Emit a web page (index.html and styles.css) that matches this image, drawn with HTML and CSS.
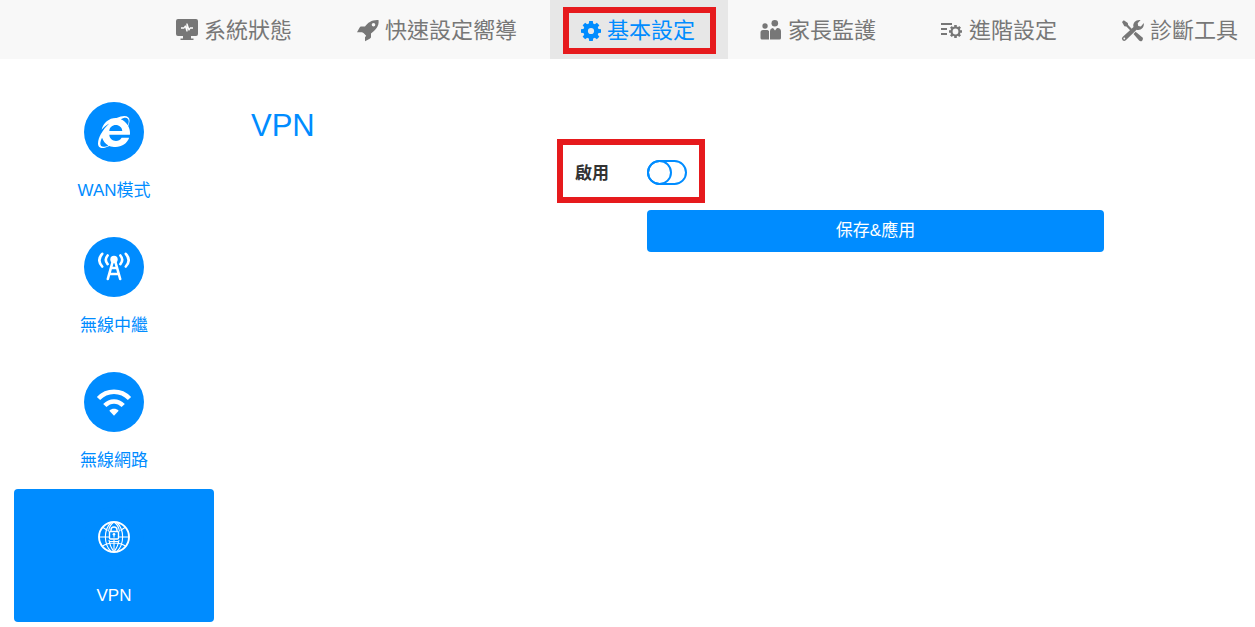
FILE: index.html
```html
<!DOCTYPE html>
<html lang="zh-Hant">
<head>
<meta charset="utf-8">
<meta name="viewport" content="width=device-width, initial-scale=1">
<title>VPN</title>
<link rel="stylesheet" href="styles.css">
</head>
<body>
<nav class="topnav">
  <a class="topnav-item" href="#status">
    <svg class="icon" viewBox="0 0 24 24" aria-hidden="true">
      <path fill="currentColor" d="M3 0h18a2 2 0 0 1 2 2v13a2 2 0 0 1-2 2h-5v2.500h2.500V21h-13v-1.500H8V17H3a2 2 0 0 1-2-2V2a2 2 0 0 1 2-2z"/>
      <path fill="none" stroke="#fff" stroke-width="1.300" stroke-linejoin="round" d="M6 9h3l1.300-2 1.700 5V5l2 6 1.200-2H18"/>
    </svg>
    系統狀態
  </a>
  <a class="topnav-item" href="#wizard">
    <svg class="icon" viewBox="0 0 24 24" aria-hidden="true">
      <path fill="currentColor" fill-rule="evenodd" d="M22.500 1C16 .5 12 3.500 9 7.500H5.500C4.500 7.500 4 8 3.500 8.800L1 13.200h5l1.500.8 2.700 2.700-1.200 1.600v3.900l4.700-2.500c.8-.5 1.300-1 1.300-2V14.500c4-3 8.500-7 7.500-13.500zM17.500 4a1.800 1.800 0 1 1 0 3.600 1.800 1.800 0 0 1 0-3.600z"/>
    </svg>
    快速設定嚮導
  </a>
  <a class="topnav-item topnav-item-active" href="#basic" aria-current="page">
    <svg class="icon icon-gear" viewBox="0 0 20 20" aria-hidden="true">
      <g fill="currentColor">
        <path d="M7.700 4L8.200 0h3.600l.5 4z"/>
        <path transform="rotate(45 10 10)" d="M7.700 4L8.200 0h3.600l.5 4z"/>
        <path transform="rotate(90 10 10)" d="M7.700 4L8.200 0h3.600l.5 4z"/>
        <path transform="rotate(135 10 10)" d="M7.700 4L8.200 0h3.600l.5 4z"/>
        <path transform="rotate(180 10 10)" d="M7.700 4L8.200 0h3.600l.5 4z"/>
        <path transform="rotate(225 10 10)" d="M7.700 4L8.200 0h3.600l.5 4z"/>
        <path transform="rotate(270 10 10)" d="M7.700 4L8.200 0h3.600l.5 4z"/>
        <path transform="rotate(315 10 10)" d="M7.700 4L8.200 0h3.600l.5 4z"/>
      </g>
      <circle cx="10" cy="10" r="5.400" fill="none" stroke="currentColor" stroke-width="4.600"/>
    </svg>
    基本設定
    <span class="callout callout-tab"></span>
  </a>
  <a class="topnav-item" href="#parental">
    <svg class="icon" viewBox="0 0 24 24" aria-hidden="true">
      <g fill="currentColor">
        <circle cx="6" cy="7" r="2.700"/>
        <circle cx="15.800" cy="4.300" r="3.300"/>
        <path d="M4 11h4.500l1.500 1v8.500H3A1.500 1.500 0 0 1 1.500 19v-5.500A2.500 2.500 0 0 1 4 11z"/>
        <path d="M14 9l2 2.500L18 9h.5a3.500 3.500 0 0 1 3.500 3.500V19a1.500 1.500 0 0 1-1.500 1.500H11v-8A3.500 3.500 0 0 1 14 9z"/>
      </g>
    </svg>
    家長監護
  </a>
  <a class="topnav-item" href="#advanced">
    <svg class="icon" viewBox="0 0 24 24" aria-hidden="true">
      <path fill="none" stroke="currentColor" stroke-width="1.800" d="M1 5h11M1 10h6M1 15h6"/>
      <circle cx="15.500" cy="12.500" r="4" fill="none" stroke="currentColor" stroke-width="2.200"/>
      <path fill="none" stroke="currentColor" stroke-width="2.600" d="M15.500 6v2.400M15.500 16.600V19M9 12.500h2.400M19.600 12.500H22M10.900 7.900l1.700 1.700M18.400 15.400l1.700 1.700M10.900 17.100l1.700-1.700M18.400 9.600l1.700-1.700"/>
    </svg>
    進階設定
  </a>
  <a class="topnav-item" href="#tools">
    <svg class="icon" viewBox="0 0 24 24" aria-hidden="true">
      <path fill="currentColor" d="M2.800 1.200l4 2.800.3 2 4.800 4.900-1.600 1.600L5.400 7.600l-2-.3L1 3z"/>
      <path fill="currentColor" d="M14.600 12.700l6.600 5.500a2.200 2.200 0 0 1-3.100 3.300l-5.600-6.500z"/>
      <path fill="currentColor" fill-rule="evenodd" d="M19.600 1l-2.900 3.300.5 2.700 2.700.5L22.800 4c.6 4.500-3 7.800-7.200 6.700L4.800 21.200a2.200 2.200 0 0 1-3.200-3.200L12.500 8C11.400 3.800 15 .3 19.600 1zM3.300 18.600a.9.9 0 1 0 0 1.800.9.9 0 0 0 0-1.800z"/>
    </svg>
    診斷工具
  </a>
</nav>

<div class="page">
  <aside class="sidebar">
    <a class="side-item" href="#wan">
      <span class="side-icon">
        <svg class="glyph" viewBox="0 0 512 512" aria-hidden="true">
          <path fill="currentColor" d="M483.049 159.706c10.855-24.575 21.424-60.438 21.424-87.871 0-72.722-79.641-98.371-209.673-38.577-107.632-7.181-211.221 73.670-237.098 186.457 30.852-34.862 78.271-82.298 121.977-101.158C125.404 166.850 79.128 228.002 43.992 291.725 23.246 329.651 0 390.940 0 436.747c0 98.575 92.854 86.500 180.251 42.006 31.423 15.430 66.559 15.573 101.695 15.573 97.124 0 184.249-54.294 216.814-146.022H377.927c-52.509 88.593-196.819 52.996-196.819-47.436H509.900c6.407-43.581-1.655-95.715-26.851-141.162zM64.559 346.877c17.711 51.150 53.703 95.871 100.266 123.304-88.741 48.940-173.267 29.096-100.266-123.304zm115.977-108.873c2-55.152 50.276-94.871 103.980-94.871 53.418 0 101.981 39.719 103.981 94.871H180.536zm184.536-187.600c21.425-10.287 48.563-22.003 72.558-22.003 31.422 0 54.274 21.717 54.274 53.722 0 20.003-7.427 49.007-14.569 67.867-26.280-42.292-65.986-81.584-112.263-99.586z"/>
        </svg>
      </span>
      <span>WAN模式</span>
    </a>
    <a class="side-item" href="#repeater">
      <span class="side-icon">
        <svg class="glyph" viewBox="0 0 32 32" aria-hidden="true">
          <circle cx="16" cy="8.500" r="3.700" fill="currentColor"/>
          <g fill="none" stroke="currentColor" stroke-width="2.600" stroke-linecap="round">
            <path d="M14.600 11L9.800 28M17.400 11l4.800 17M13.500 17h5M12 23h8"/>
            <path d="M9.600 4.500c-2.200 2.600-2.200 6 0 8.600M22.400 4.500c2.200 2.600 2.200 6 0 8.600"/>
            <path d="M4.200 2.800c-3.600 4-3.600 8.700 0 12.700M27.800 2.800c3.600 4 3.600 8.700 0 12.700"/>
          </g>
        </svg>
      </span>
      <span>無線中繼</span>
    </a>
    <a class="side-item" href="#wireless">
      <span class="side-icon">
        <svg class="glyph glyph-wide" viewBox="0 0 36 36" aria-hidden="true">
          <g fill="none" stroke="currentColor" stroke-width="4.500">
            <path d="M2.500 14.500C11 5.500 25 5.500 33.500 14.500"/>
            <path d="M8.800 21.500c5.300-5.500 13.100-5.500 18.400 0"/>
          </g>
          <path fill="currentColor" d="M13.300 26.700c2.800-2.500 6.600-2.500 9.400 0L18 31.800z"/>
        </svg>
      </span>
      <span>無線網路</span>
    </a>
    <a class="side-item side-item-active" href="#vpn" aria-current="page">
      <span class="side-icon">
        <svg class="glyph" viewBox="0 0 32 32" aria-hidden="true">
          <g fill="none" stroke="currentColor" stroke-width="1.100">
            <circle cx="16" cy="16" r="15" stroke-width="1.900"/>
            <path d="M16 18.500V31M1 16h10.500M20.500 16H31M5 6.500l4.500 3M27 6.500l-4.500 3M4.500 25c6-4 17-4 23 0M12 20.500h8"/>
            <path d="M13 1.500C5.500 9 5.500 23 13 30.500M19 1.500C26.500 9 26.500 23 19 30.500M16 1c-3 2-5 5.500-5.500 9.500M16 1c3 2 5 5.500 5.500 9.500M11 19c.6 4.500 2.400 8.500 5 12 2.600-3.500 4.400-7.500 5-12"/>
            <rect x="11.500" y="10.500" width="9" height="7.500" rx="1" stroke-width="1.400"/>
            <path d="M13 10.500V9a3 3 0 0 1 6 0v1.500" stroke-width="1.400"/>
            <path d="M16 13.500v3"/>
          </g>
          <circle cx="16" cy="13.300" r="1.300" fill="currentColor"/>
        </svg>
      </span>
      <span>VPN</span>
    </a>
  </aside>

  <main class="content">
    <h1 class="title">VPN</h1>
    <form class="form">
      <label class="form-label" for="enable">啟用</label>
      <div class="form-control">
        <input class="switch" type="checkbox" role="switch" id="enable">
        <span class="callout callout-switch"></span>
      </div>
      <button class="save" type="button">保存&amp;應用</button>
    </form>
  </main>
</div>
</body>
</html>
```
FILE: styles.css
```css
:root {
  --blue: #008cff;
  --red: #e61a1d;
  --grey: #777;
}

*,
*::before {
  box-sizing: border-box;
}

body {
  margin: 0;
  background: #fff;
  color: #333;
  font: 17px/24px "Liberation Sans", "Noto Sans CJK TC", sans-serif;
  overflow-x: hidden;
}

a {
  color: inherit;
  text-decoration: none;
}

.topnav {
  display: flex;
  padding-left: 144px;
  background: #f8f8f8;
  overflow: hidden;
}

.topnav-item {
  position: relative;
  display: flex;
  flex: none;
  align-items: center;
  gap: 5px;
  padding: 15px 33px 12px 31px;
  color: var(--grey);
  font-size: 22px;
  line-height: 32px;
  white-space: nowrap;
}

.topnav-item-active {
  gap: 6px;
  background: #e7e7e7;
  color: var(--blue);
}

.icon {
  flex: none;
  width: 24px;
  height: 24px;
}

.icon-gear {
  width: 20px;
  height: 20px;
}

.callout {
  position: absolute;
  border: 6px solid var(--red);
  pointer-events: none;
}

.callout-tab {
  inset: 7px 12px 5px 13px;
}

.callout-switch {
  top: -21px;
  left: -90px;
  width: 148px;
  height: 64px;
}

.page {
  display: flex;
  gap: 37px;
  padding: 25px 0 5px 14px;
}

.sidebar {
  display: flex;
  flex: none;
  flex-direction: column;
  gap: 2px;
  width: 200px;
}

.side-item {
  display: flex;
  flex-direction: column;
  align-items: center;
  gap: 17px;
  padding: 18px 0 14px;
  border-radius: 4px;
  color: var(--blue);
}

.side-item-active {
  background: var(--blue);
  color: #fff;
}

.side-icon {
  display: flex;
  align-items: center;
  justify-content: center;
  width: 60px;
  height: 60px;
  border-radius: 50%;
  background: var(--blue);
  color: #fff;
}

.glyph {
  width: 32px;
  height: 32px;
}

.glyph-wide {
  width: 36px;
  height: 36px;
}

.content {
  flex: 1;
  min-width: 0;
}

.title {
  margin: 0;
  padding-top: 24px;
  color: var(--blue);
  font-size: 31px;
  font-weight: 400;
  line-height: 36px;
}

.form {
  display: grid;
  grid-template-columns: 358fr 457fr 113fr;
  gap: 25px 38px;
  padding-top: 16px;
}

.form-label {
  justify-self: end;
  padding-top: 2px;
  font-weight: 700;
  line-height: 23px;
}

.form-control {
  position: relative;
  display: flex;
}

.switch {
  display: flex;
  width: 40px;
  height: 25px;
  margin: 0;
  border: 2px solid var(--blue);
  border-radius: 13px;
  appearance: none;
  background: #fff;
  cursor: pointer;
}

.switch::before {
  content: "";
  width: 25px;
  height: 25px;
  margin: -2px;
  border: 2px solid var(--blue);
  border-radius: 50%;
}

.switch:checked {
  justify-content: flex-end;
  background: var(--blue);
}

.switch:checked::before {
  background: #fff;
}

.save {
  grid-column: 2;
  padding: 9px 16px;
  border: 0;
  border-radius: 4px;
  background: var(--blue);
  color: #fff;
  font: inherit;
  cursor: pointer;
}
```
